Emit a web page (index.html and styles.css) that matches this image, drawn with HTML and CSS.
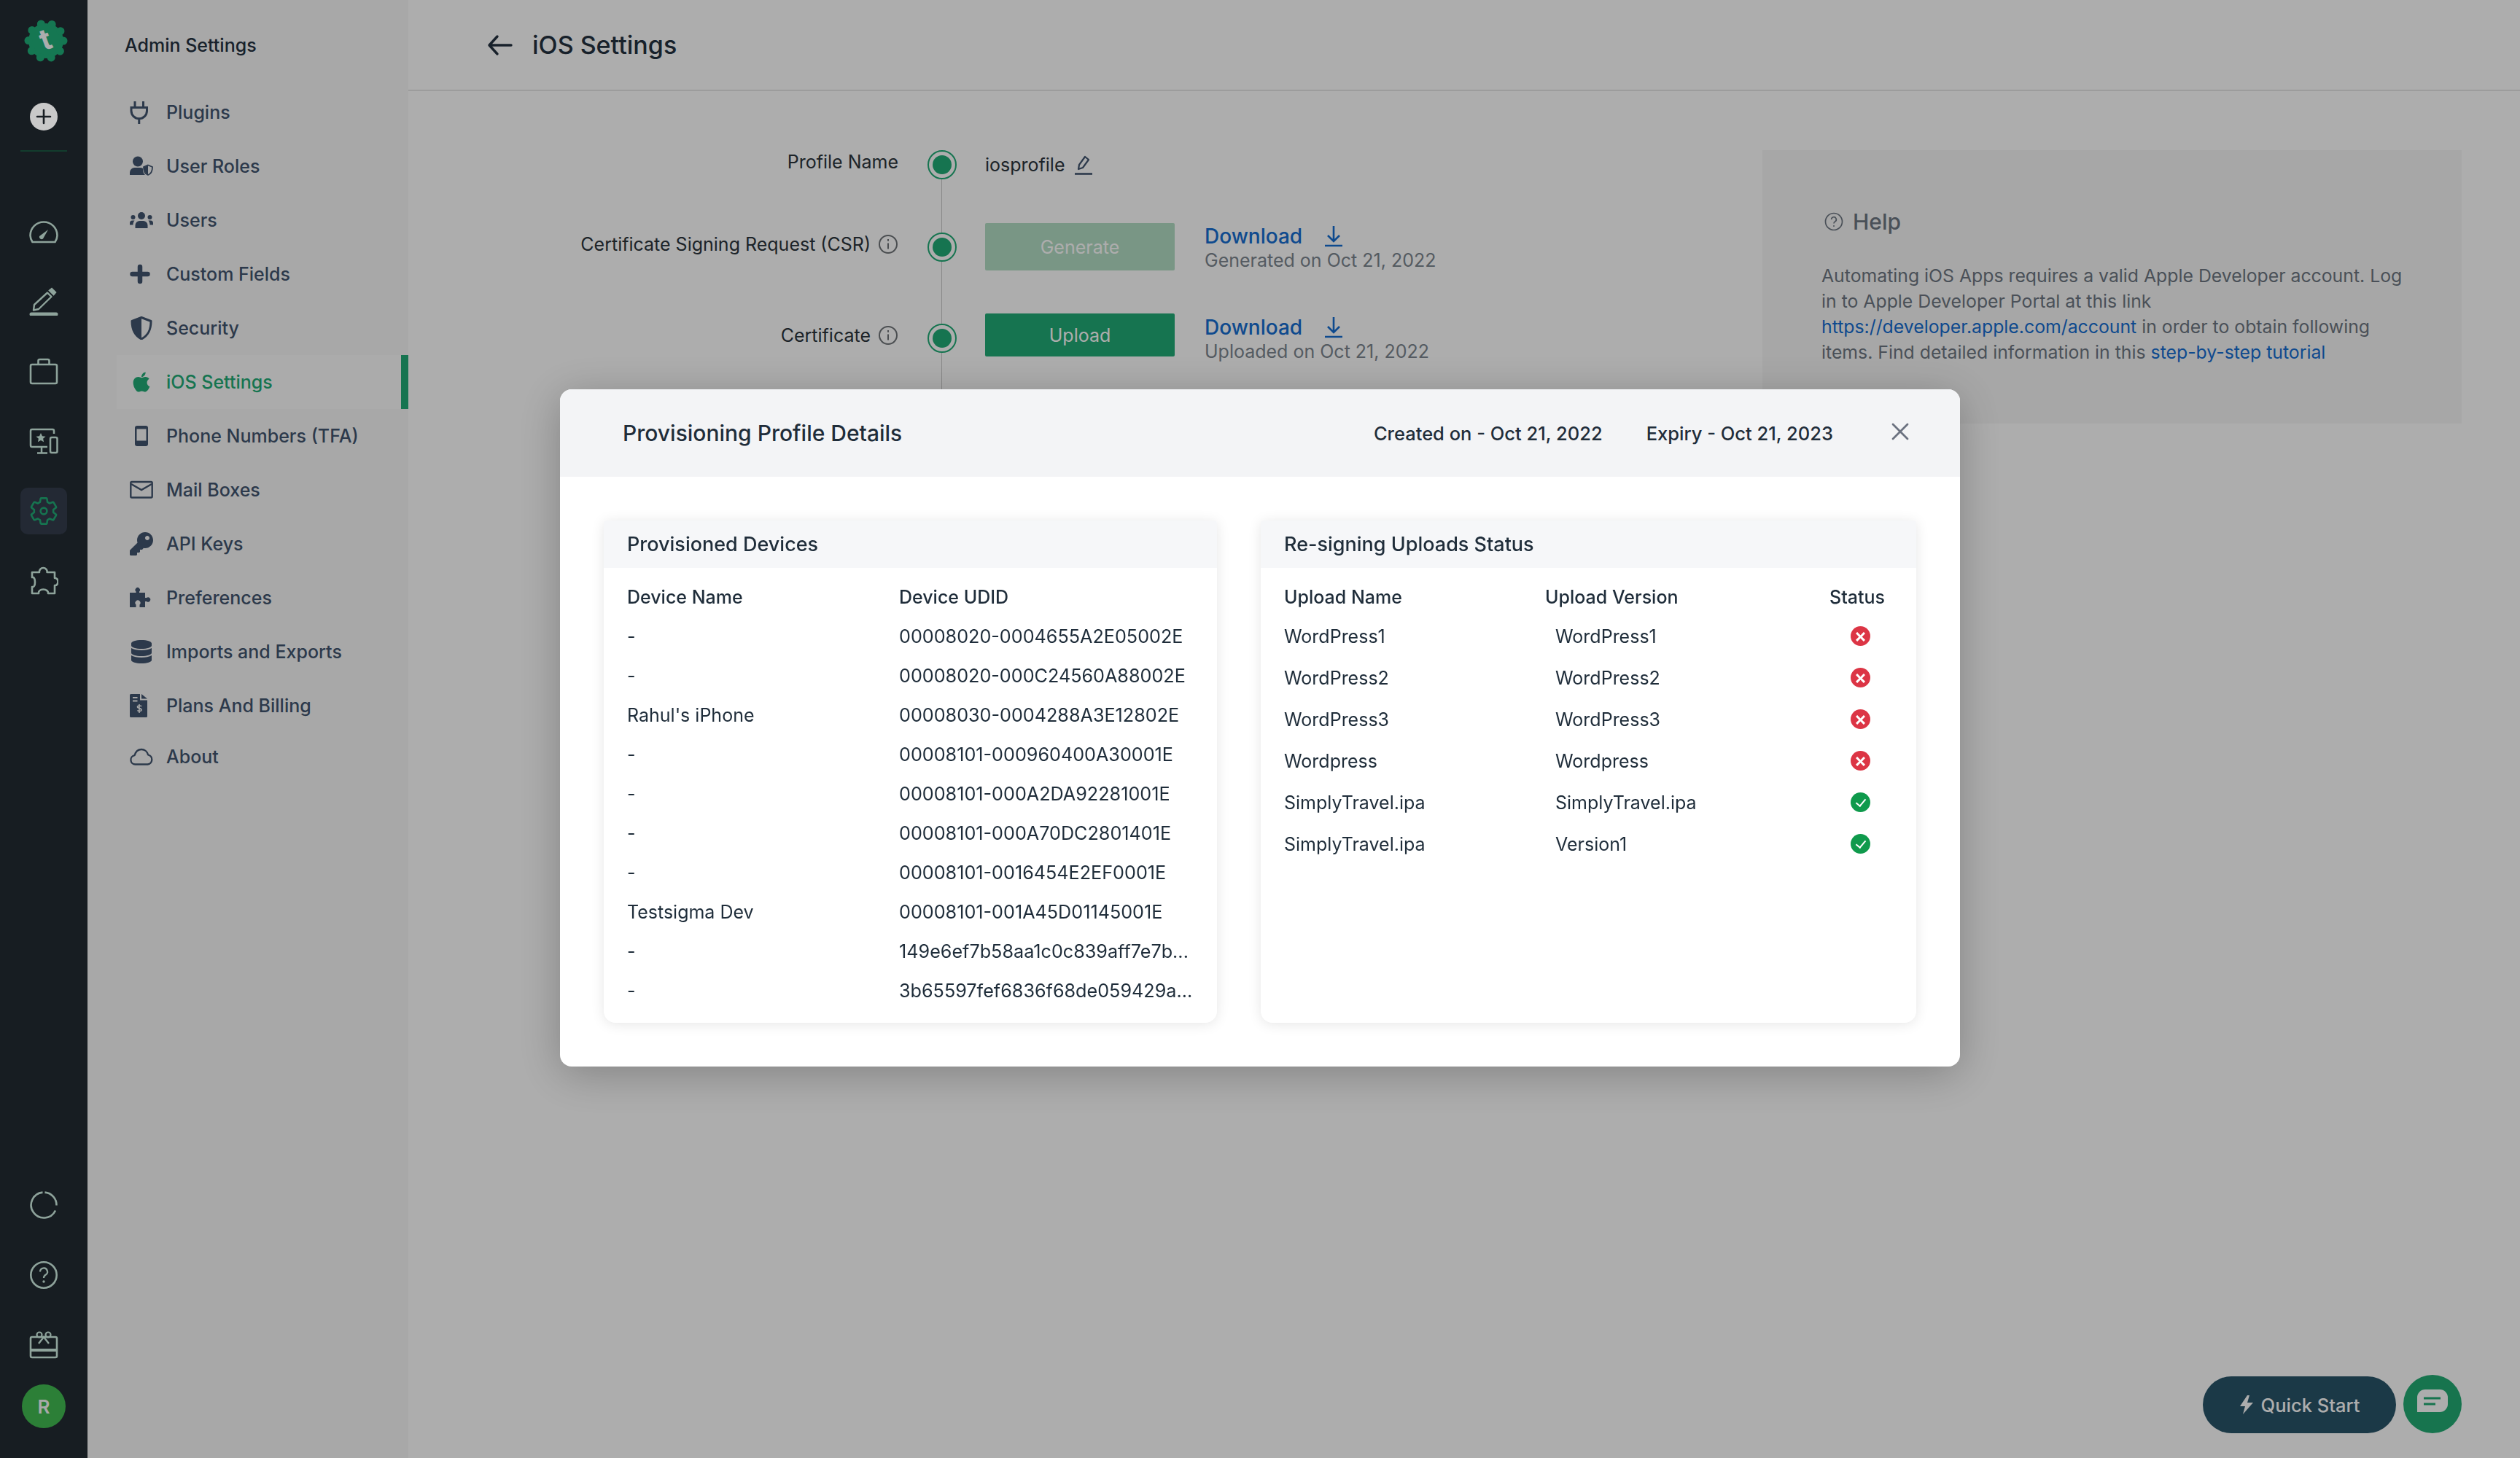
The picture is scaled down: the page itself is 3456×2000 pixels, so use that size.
FILE: index.html
```html
<!DOCTYPE html>
<html lang="en">
<head>
  <meta charset="UTF-8">
  <title>iOS Settings</title>
  <link rel="stylesheet" href="styles.css">
</head>
<body>
  <div class="page">
    <!-- Icon rail -->
    <div class="rail">
      <div class="rail-top">
        <svg class="logo" width="64" height="64" viewBox="0 0 64 64">
          <circle cx="32" cy="32" r="24" fill="#1fb07a" stroke="#1fb07a" stroke-width="11" stroke-linecap="round" stroke-dasharray="0 15.08"/>
          <text class="logo-t" x="32" y="44" text-anchor="middle" transform="rotate(-20 32 32)">t</text>
        </svg>
        <div class="rail-add">
          <svg width="22" height="22" viewBox="0 0 22 22"><path d="M11 2v18M2 11h18" stroke="#181e23" stroke-width="2.6" stroke-linecap="round"/></svg>
        </div>
        <div class="rail-divider"></div>
        <div class="rail-icons">
          <div class="rail-item">
            <svg width="40" height="40" viewBox="0 0 40 40" fill="none" stroke="currentColor" stroke-width="2.6"><path d="M4.5 35C3 32.5 1.5 30 1.5 26a18.5 18.5 0 0 1 37 0c0 4-1.500 6.500-3 9z" stroke-linejoin="round"/><path d="M14 27l12-9-7 12.5a3.2 3.2 0 0 1-5-3.5z" fill="currentColor" stroke="none"/></svg>
          </div>
          <div class="rail-item">
            <svg width="40" height="40" viewBox="0 0 40 40" fill="none" stroke="currentColor" stroke-width="2.4"><path d="M7 25L25 8.5l5.5 5.5L13 31l-7 1.5z" stroke-linejoin="round"/><path d="M28 5.500l3-2.500 5 5-2.500 3z" fill="currentColor"/><path d="M3 38h34" stroke-width="5" stroke-linecap="round"/></svg>
          </div>
          <div class="rail-item">
            <svg width="40" height="40" viewBox="0 0 40 40" fill="none" stroke="currentColor" stroke-width="2.6"><rect x="2" y="11" width="36" height="26" rx="2"/><path d="M12.5 11V6a2 2 0 0 1 2-2h11a2 2 0 0 1 2 2v5"/></svg>
          </div>
          <div class="rail-item">
            <svg width="40" height="40" viewBox="0 0 40 40" fill="none" stroke="currentColor" stroke-width="2.5"><path d="M34 10V6a2 2 0 0 0-2-2H4a2 2 0 0 0-2 2v20a2 2 0 0 0 2 2h21M17 28v8M11 36.5h14"/><rect x="29" y="15" width="9.5" height="21" rx="2"/><path d="M16 9l2 4.3 4.500.5-3.400 3 1 4.400-4.100-2.300-4.100 2.300 1-4.400-3.400-3 4.500-.5z" fill="currentColor" stroke="none"/></svg>
          </div>
          <div class="rail-item is-active">
            <svg width="44" height="44" viewBox="0 0 24 24" fill="none" stroke="currentColor" stroke-width="1.4" stroke-linejoin="round"><circle cx="12" cy="12" r="2.4"/><path d="M19.14 12.94c.04-.3.06-.61.06-.94 0-.32-.02-.64-.07-.94l2.03-1.58c.18-.14.23-.41.12-.61l-1.92-3.32c-.12-.22-.37-.29-.59-.22l-2.39.96c-.5-.38-1.03-.7-1.62-.94l-.36-2.54c-.04-.24-.24-.41-.48-.41h-3.84c-.24 0-.43.17-.47.41l-.36 2.54c-.59.24-1.13.57-1.62.94l-2.39-.96c-.22-.08-.47 0-.59.22L2.74 8.87c-.12.21-.08.47.12.61l2.03 1.58c-.05.3-.09.63-.09.94s.02.64.07.94l-2.03 1.58c-.18.14-.23.41-.12.61l1.92 3.32c.12.22.37.29.59.22l2.39-.96c.5.38 1.03.7 1.62.94l.36 2.54c.05.24.24.41.48.41h3.84c.24 0 .44-.17.47-.41l.36-2.54c.59-.24 1.13-.56 1.62-.94l2.39.96c.22.08.47 0 .59-.22l1.92-3.32c.12-.22.07-.47-.12-.61l-2.01-1.58z"/></svg>
          </div>
          <div class="rail-item">
            <svg width="40" height="40" viewBox="0 0 40 40" fill="none" stroke="currentColor" stroke-width="2.6" stroke-linejoin="round"><path d="M4 8H14c-.5-3 2-6 5.300-6s5.800 3 5.300 6H35V16c3-.5 4.500 2.500 4.500 5s-1.500 5.500-4.500 5V37H26c.5-3-2.500-5.500-6.700-5.500S12.500 34 13 37H4V28c3 1 4-3 4-6.500s-1-7.500-4-6.500z"/></svg>
          </div>
        </div>
      </div>
      <div class="rail-bottom">
        <div class="rail-item">
          <svg width="40" height="40" viewBox="0 0 40 40" fill="none" stroke="currentColor" stroke-width="2.6"><path d="M21.5 2.6A17.5 17.5 0 0 1 37.5 20.5"/><path d="M36 27.5A17.5 17.5 0 1 1 18.500 2.600"/></svg>
        </div>
        <div class="rail-item">
          <svg width="40" height="40" viewBox="0 0 40 40" fill="none" stroke="currentColor" stroke-width="2.6"><circle cx="20" cy="20" r="17.7"/><path d="M15 15.5a5 5 0 1 1 7.5 4.3c-1.8 1.100-2.500 2.200-2.500 4.200" stroke-width="2.2"/><circle cx="20" cy="29" r="1.7" fill="currentColor" stroke="none"/></svg>
        </div>
        <div class="rail-item">
          <svg width="40" height="40" viewBox="0 0 40 40" fill="none" stroke="currentColor" stroke-width="2.6"><rect x="2" y="9" width="36" height="28" rx="2"/><path d="M2 27h36" stroke-width="4"/><path d="M13 18l7-9 7 9" stroke-width="2.4"/><circle cx="14" cy="6" r="3.5" stroke-width="2.2"/><circle cx="26" cy="6" r="3.5" stroke-width="2.2"/></svg>
        </div>
        <div class="avatar">R</div>
      </div>
    </div>

    <!-- Settings sidebar -->
    <div class="sidebar">
      <div class="sidebar-title">Admin Settings</div>
      <div class="side-list">
        <div class="side-item">
          <svg width="32" height="32" viewBox="0 0 32 32" fill="none" stroke="currentColor" stroke-width="3"><path d="M7 1v8M18.500 1v8M2 9.500h21.500v4.500a10.750 10.750 0 0 1-21.500 0zM12.750 25v7"/></svg>
          <span>Plugins</span>
        </div>
        <div class="side-item">
          <svg width="32" height="32" viewBox="0 0 32 32" fill="currentColor"><circle cx="11" cy="9.500" r="7"/><path d="M0 28v-3.500a6.500 6.500 0 0 1 6.500-6.500h8a7 7 0 0 1 3.500 1c0 4 .5 7 3 9z"/><path d="M25 14.500l6 2.500c0 6-2 9.500-6 11-4-1.500-6-5-6-11z" fill="none" stroke="currentColor" stroke-width="1.800"/><path d="M25 15l-5.500 2.300c0 5.500 2 8.700 5.500 10.200z"/></svg>
          <span>User Roles</span>
        </div>
        <div class="side-item">
          <svg width="32" height="32" viewBox="0 0 32 32" fill="currentColor"><circle cx="16" cy="10" r="5"/><circle cx="4.500" cy="12" r="3"/><circle cx="27.500" cy="12" r="3"/><path d="M7.500 27v-4a6 6 0 0 1 6-6h5a6 6 0 0 1 6 6v4zM0 22.500V20a3.500 3.500 0 0 1 3.500-3.500h3c-1.300 1.500-2 3.500-2 6zM32 22.500V20a3.500 3.500 0 0 0-3.500-3.500h-3c1.300 1.500 2 3.500 2 6z"/></svg>
          <span>Users</span>
        </div>
        <div class="side-item">
          <svg width="32" height="32" viewBox="0 0 32 32" fill="none" stroke="currentColor" stroke-width="6.500" stroke-linecap="round"><path d="M14 6v20M3.500 16h21"/></svg>
          <span>Custom Fields</span>
        </div>
        <div class="side-item">
          <svg width="32" height="32" viewBox="0 0 32 32" fill="currentColor"><path d="M16 1.500L29 6.500c0 12-3.500 19.500-13 24.500-9.500-5-13-12.500-13-24.500z" fill="none" stroke="currentColor" stroke-width="3" stroke-linejoin="round"/><path d="M16 1.500L3 6.500c0 12 3.500 19.500 13 24.500z"/></svg>
          <span>Security</span>
        </div>
        <div class="side-item is-active">
          <svg width="32" height="32" viewBox="-60 -10 497 532" fill="currentColor"><path d="M314.700 268.700c-.2-36.700 16.400-64.400 50-84.800-18.800-26.900-47.200-41.700-84.700-44.600-35.500-2.800-74.300 20.700-88.500 20.700-15 0-49.400-19.700-76.400-19.700C59.300 141.200 0 184.800 0 273.500q0 39.300 14.400 81.200c12.800 36.700 59 126.700 107.200 125.200 25.200-.6 43-17.900 75.800-17.900 31.800 0 48.300 17.900 76.400 17.900 48.600-.7 90.400-82.500 102.600-119.300-65.200-30.700-61.700-90-61.700-91.900zm-56.600-164.200c27.300-32.400 24.800-61.900 24-72.500-24.100 1.400-52 16.400-67.900 34.900-17.500 19.800-27.800 44.300-25.600 71.900 26.100 2 49.900-11.400 69.500-34.300z"/></svg>
          <span>iOS Settings</span>
        </div>
        <div class="side-item">
          <svg width="32" height="32" viewBox="0 0 32 32"><rect x="7" y="2" width="18" height="28" rx="3" fill="currentColor"/><rect x="9.500" y="6.500" width="13" height="16" fill="#f8f8f8"/></svg>
          <span>Phone Numbers (TFA)</span>
        </div>
        <div class="side-item">
          <svg width="32" height="32" viewBox="0 0 32 32" fill="none" stroke="currentColor" stroke-width="2.400"><rect x="1.300" y="5" width="29.400" height="21.500" rx="1.500"/><path d="M2 8l14 8 14-8"/></svg>
          <span>Mail Boxes</span>
        </div>
        <div class="side-item">
          <svg width="32" height="32" viewBox="0 0 512 512" fill="currentColor"><path d="M512 176.001C512 273.203 433.202 352 336 352c-11.220 0-22.190-1.062-32.827-3.069l-24.012 27.014A23.999 23.999 0 0 1 261.223 384H224v40c0 13.255-10.745 24-24 24h-40v40c0 13.255-10.745 24-24 24H24c-13.255 0-24-10.745-24-24v-78.059c0-6.365 2.529-12.470 7.029-16.971l161.802-161.802C163.108 213.814 160 195.271 160 176 160 78.798 238.797.001 335.999 0 433.488-.001 512 78.511 512 176.001zM336 128c0 26.510 21.490 48 48 48s48-21.490 48-48-21.490-48-48-48-48 21.490-48 48z"/></svg>
          <span>API Keys</span>
        </div>
        <div class="side-item">
          <svg width="32" height="32" viewBox="0 0 32 32" fill="currentColor"><path d="M0 9h8.500V7.500a3.200 3.200 0 1 1 4.500 0V9h8v7h2a3.200 3.200 0 1 1 0 5h-2v8h-7.500v-3.500a3.500 3.500 0 1 0-5 0V29H0z"/></svg>
          <span>Preferences</span>
        </div>
        <div class="side-item">
          <svg width="32" height="32" viewBox="-32 0 512 512" fill="currentColor"><path d="M448 73.143v45.714C448 159.143 347.667 192 224 192S0 159.143 0 118.857V73.143C0 32.857 100.333 0 224 0s224 32.857 224 73.143zM448 176v102.857C448 319.143 347.667 352 224 352S0 319.143 0 278.857V176c48.125 33.143 136.208 48.572 224 48.572S399.874 209.143 448 176zM448 336v102.857C448 479.143 347.667 512 224 512S0 479.143 0 438.857V336c48.125 33.143 136.208 48.572 224 48.572S399.874 369.143 448 336z"/></svg>
          <span>Imports and Exports</span>
        </div>
        <div class="side-item">
          <svg width="32" height="32" viewBox="0 0 32 32" fill="currentColor"><path d="M0 1.500A1.500 1.500 0 0 1 1.500 0H14v8.500h10v22a1.500 1.500 0 0 1-1.500 1.500h-21A1.500 1.500 0 0 1 0 30.500z"/><path d="M16 0l8 6.500h-8z"/><path d="M4 5h6.500M4 9.500h6.500" stroke="#f8f8f8" stroke-width="2" fill="none"/><path d="M16 17c-1-1.500-5.500-1.500-5.500.6 0 2.600 5.500 1.400 5.500 4.200 0 2.200-4.500 2.200-5.500.6M13 14v12" stroke="#f8f8f8" stroke-width="1.600" fill="none"/></svg>
          <span>Plans And Billing</span>
        </div>
        <div class="side-item side-item-last">
          <svg width="32" height="32" viewBox="0 0 32 32" fill="none" stroke="currentColor" stroke-width="2.300" stroke-linejoin="round"><path d="M7.500 26.500a6.200 6.200 0 0 1-1-12.300C8 9 11.500 6 16 6c4.500 0 8 3 9 7.300a6.700 6.700 0 0 1-.5 13.200z"/></svg>
          <span>About</span>
        </div>
      </div>
    </div>

    <!-- Page behind the dialog -->
    <div class="main">
      <div class="topbar">
        <svg width="36" height="36" viewBox="0 0 36 36" fill="none" stroke="#243140" stroke-width="3.400" stroke-linecap="round" stroke-linejoin="round"><path d="M33 18H3M14 6L3 18l11 12"/></svg>
        <h1>iOS Settings</h1>
      </div>
      <div class="content">
        <div class="steps">
          <div class="steps-line"></div>
          <div class="step">
            <div class="step-label">Profile Name</div>
            <div class="step-dot"><span></span></div>
            <div class="step-body">
              <span class="profile-name">iosprofile</span>
              <svg width="28" height="28" viewBox="0 0 28 28" fill="none" stroke="#42556f" stroke-width="2.200" stroke-linejoin="round"><path d="M7 20l1-6L16 3l5 4-8 11z"/><path d="M2 26.500h24" stroke-width="2.600"/></svg>
            </div>
          </div>
          <div class="step">
            <div class="step-label">Certificate Signing Request (CSR) <svg class="info" width="28" height="28" viewBox="0 0 28 28" fill="none" stroke="#6f7478" stroke-width="2"><circle cx="14" cy="14" r="12"/><path d="M14 12.500v8M14 7v2.800"/></svg></div>
            <div class="step-dot"><span></span></div>
            <div class="step-body">
              <div class="btn btn-disabled">Generate</div>
              <div class="file-info">
                <div class="download">Download <svg width="26" height="30" viewBox="0 0 26 30" fill="none" stroke="#166dd1" stroke-width="2.600"><path d="M13 1v20M5 14l8 8 8-8M1 28h24"/></svg></div>
                <div class="file-date">Generated on Oct 21, 2022</div>
              </div>
            </div>
          </div>
          <div class="step">
            <div class="step-label">Certificate <svg class="info" width="28" height="28" viewBox="0 0 28 28" fill="none" stroke="#6f7478" stroke-width="2"><circle cx="14" cy="14" r="12"/><path d="M14 12.500v8M14 7v2.800"/></svg></div>
            <div class="step-dot"><span></span></div>
            <div class="step-body step-body-top">
              <div class="btn btn-primary">Upload</div>
              <div class="file-info">
                <div class="download">Download <svg width="26" height="30" viewBox="0 0 26 30" fill="none" stroke="#166dd1" stroke-width="2.600"><path d="M13 1v20M5 14l8 8 8-8M1 28h24"/></svg></div>
                <div class="file-date">Uploaded on Oct 21, 2022</div>
              </div>
            </div>
          </div>
        </div>
        <div class="help">
          <div class="help-title">
            <svg width="26" height="26" viewBox="0 0 26 26" fill="none" stroke="#6e7782" stroke-width="1.700"><circle cx="13" cy="13" r="11.500"/><path d="M9.700 10a3.300 3.300 0 1 1 4.900 2.900c-1.100.7-1.600 1.400-1.600 2.700"/><circle cx="13" cy="19" r="1" fill="#6e7782" stroke="none"/></svg>
            Help
          </div>
          <p>Automating iOS Apps requires a valid Apple Developer account. Log in to Apple Developer Portal at this link <a>https://developer.apple.com/account</a> in order to obtain following items. Find detailed information in this <a>step-by-step tutorial</a></p>
        </div>
      </div>
    </div>

    <div class="quick-start">
      <svg width="20" height="26" viewBox="0 0 20 26" fill="currentColor"><path d="M11 0L1 15h7l-3 11 14-16h-8l3-10z"/></svg>
      Quick Start
    </div>
    <div class="chat-button">
      <svg width="42" height="32" viewBox="0 0 42 32"><path d="M0 11A11 11 0 0 1 11 0h20a11 11 0 0 1 11 11v9a11 11 0 0 1-11 11H0z" fill="#fff"/><path d="M9 12h23M9 20h16" stroke="#22ac74" stroke-width="3"/></svg>
    </div>
  </div>

  <!-- Dialog -->
  <div class="backdrop">
    <div class="modal">
      <div class="modal-head">
        <div class="modal-title">Provisioning Profile Details</div>
        <div class="modal-date">Created on - Oct 21, 2022</div>
        <div class="modal-date">Expiry - Oct 21, 2023</div>
        <svg class="modal-close" width="24" height="24" viewBox="0 0 24 24" fill="none" stroke="#6b7280" stroke-width="2.800" stroke-linecap="round"><path d="M2 2l20 20M22 2L2 22"/></svg>
      </div>
      <div class="modal-body">
        <div class="card">
          <div class="card-head">Provisioned Devices</div>
          <table class="devices">
            <thead>
              <tr><th>Device Name</th><th>Device UDID</th></tr>
            </thead>
            <tbody>
              <tr><td>-</td><td>00008020-0004655A2E05002E</td></tr>
              <tr><td>-</td><td>00008020-000C24560A88002E</td></tr>
              <tr><td>Rahul's iPhone</td><td>00008030-0004288A3E12802E</td></tr>
              <tr><td>-</td><td>00008101-000960400A30001E</td></tr>
              <tr><td>-</td><td>00008101-000A2DA92281001E</td></tr>
              <tr><td>-</td><td>00008101-000A70DC2801401E</td></tr>
              <tr><td>-</td><td>00008101-0016454E2EF0001E</td></tr>
              <tr><td>Testsigma Dev</td><td>00008101-001A45D01145001E</td></tr>
              <tr><td>-</td><td>149e6ef7b58aa1c0c839aff7e7b...</td></tr>
              <tr><td>-</td><td>3b65597fef6836f68de059429a...</td></tr>
            </tbody>
          </table>
        </div>
        <div class="card">
          <div class="card-head">Re-signing Uploads Status</div>
          <table class="uploads">
            <thead>
              <tr><th>Upload Name</th><th>Upload Version</th><th>Status</th></tr>
            </thead>
            <tbody>
              <tr><td>WordPress1</td><td>WordPress1</td><td><span class="status status-fail"></span></td></tr>
              <tr><td>WordPress2</td><td>WordPress2</td><td><span class="status status-fail"></span></td></tr>
              <tr><td>WordPress3</td><td>WordPress3</td><td><span class="status status-fail"></span></td></tr>
              <tr><td>Wordpress</td><td>Wordpress</td><td><span class="status status-fail"></span></td></tr>
              <tr><td>SimplyTravel.ipa</td><td>SimplyTravel.ipa</td><td><span class="status status-ok"></span></td></tr>
              <tr><td>SimplyTravel.ipa</td><td>Version1</td><td><span class="status status-ok"></span></td></tr>
            </tbody>
          </table>
        </div>
      </div>
    </div>
  </div>
</body>
</html>
```

FILE: styles.css
```css
body {
  font-family: Inter, "Liberation Sans", sans-serif;
  background-color: #fff;
  color: #243140;
  margin: 0;
  padding: 0;
  overflow: hidden;
}
.page {
  display: flex;
  height: 2000px;
}

/* Icon rail */
.rail {
  width: 120px;
  flex: none;
  display: flex;
  flex-direction: column;
  justify-content: space-between;
  background-color: #232c33;
  color: #d2f0e5;
}
.rail-top {
  display: flex;
  flex-direction: column;
  align-items: center;
}
.logo {
  margin: 24px 0 0 6px;
}
.logo-t {
  font-family: Inter, sans-serif;
  font-size: 40px;
  font-weight: 700;
  fill: #fff;
}
.rail-add {
  position: relative;
  z-index: 20;
  width: 38px;
  height: 38px;
  margin-top: 53px;
  border-radius: 50%;
  background-color: #c9c9c9;
  display: flex;
  align-items: center;
  justify-content: center;
}
.rail-divider {
  width: 64px;
  height: 2px;
  margin-top: 27px;
  background-color: #1d5a45;
}
.rail-icons {
  margin-top: 77px;
}
.rail-item {
  width: 64px;
  height: 64px;
  margin-bottom: 32px;
  border-radius: 10px;
  display: flex;
  align-items: center;
  justify-content: center;
}
.rail-item.is-active {
  background-color: #343d4d;
  color: #21ac76;
}
.rail-bottom {
  display: flex;
  flex-direction: column;
  align-items: center;
  padding-bottom: 41px;
}
.avatar {
  width: 60px;
  height: 60px;
  margin-top: -10px;
  border-radius: 50%;
  background-color: #41bb51;
  color: #f9f9f9;
  font-size: 26px;
  font-weight: 600;
  display: flex;
  align-items: center;
  justify-content: center;
}

/* Settings sidebar */
.sidebar {
  width: 440px;
  flex: none;
  background-color: #f8f8f8;
}
.sidebar-title {
  margin: 45px 0 0 51px;
  font-size: 25px;
  line-height: 34px;
  font-weight: 500;
  color: #243140;
}
.side-list {
  margin: 38px 0 0 40px;
}
.side-item {
  height: 74px;
  padding-left: 18px;
  display: flex;
  align-items: center;
  gap: 18px;
  font-size: 25px;
  font-weight: 500;
  color: #42556f;
}
.side-item.is-active {
  background-color: #fcfcfc;
  border-right: 10px solid #21ac76;
  color: #21ac76;
}
.side-item-last {
  margin-top: -4px;
}

/* Main page */
.main {
  flex: 1;
}
.topbar {
  height: 125px;
  padding-left: 108px;
  box-sizing: border-box;
  display: flex;
  align-items: center;
  gap: 26px;
  border-bottom: 2px solid #e6e6e6;
}
.topbar h1 {
  margin: 0;
  font-size: 34px;
  font-weight: 500;
  color: #243140;
}
.content {
  display: flex;
  justify-content: space-between;
  align-items: flex-start;
}
.steps {
  position: relative;
  padding-top: 68px;
}
.steps-line {
  position: absolute;
  left: 731px;
  top: 100px;
  width: 1px;
  height: 400px;
  background-color: #c9c9c9;
}
.step {
  position: relative;
  display: grid;
  grid-template-columns: 672px 119px auto;
  height: 65px;
  margin-bottom: 48px;
  align-items: center;
}
.step:nth-child(3) {
  margin-bottom: 60px;
}
.step-label {
  padding-bottom: 8px;
  font-size: 25px;
  color: #2b343c;
  text-align: right;
  display: flex;
  align-items: center;
  justify-content: flex-end;
  gap: 10px;
}
.step-dot {
  width: 40px;
  height: 40px;
  justify-self: center;
  box-sizing: border-box;
  border: 2px solid #21ac76;
  border-radius: 50%;
  background-color: #fff;
  display: flex;
  align-items: center;
  justify-content: center;
}
.step-dot span {
  width: 26px;
  height: 26px;
  border-radius: 50%;
  background-color: #21ac76;
}
.step-body {
  display: flex;
  align-items: center;
  gap: 12px;
}
.step-body-top {
  align-items: flex-start;
}
.profile-name {
  font-size: 25px;
  color: #2b343c;
}
.btn {
  width: 260px;
  height: 65px;
  margin-right: 29px;
  border-radius: 2px;
  font-size: 25px;
  color: #fff;
  display: flex;
  align-items: center;
  justify-content: center;
}
.btn-disabled {
  background-color: #b3ddc5;
  margin-top: -1px;
}
.btn-primary {
  height: 59px;
  margin-top: -1px;
  background-color: #21ac76;
}
.file-info {
  display: flex;
  flex-direction: column;
}
.download {
  height: 36px;
  font-size: 28px;
  font-weight: 500;
  color: #166dd1;
  display: flex;
  align-items: center;
  gap: 30px;
}
.file-date {
  font-size: 25px;
  line-height: 30px;
  color: #7d8690;
}
.help {
  width: 959px;
  height: 375px;
  margin: 81px 80px 0 0;
  padding: 78px 70px 0 81px;
  box-sizing: border-box;
  background-color: #f7f7f7;
  color: #6e7782;
}
.help-title {
  height: 40px;
  font-size: 30px;
  font-weight: 500;
  display: flex;
  align-items: center;
  gap: 13px;
  padding-left: 4px;
}
.help p {
  margin: 37px 0 0;
  font-size: 24.8px;
  line-height: 35px;
}
.help a {
  color: #166dd1;
}
.quick-start {
  position: absolute;
  left: 3021px;
  top: 1888px;
  width: 265px;
  height: 78px;
  border-radius: 39px;
  background-color: #295569;
  color: #fff;
  font-size: 25.5px;
  font-weight: 500;
  display: flex;
  align-items: center;
  justify-content: center;
  gap: 10px;
}
.chat-button {
  position: absolute;
  left: 3296px;
  top: 1886px;
  width: 80px;
  height: 80px;
  border-radius: 50%;
  background-color: #22ac74;
  display: flex;
  align-items: center;
  justify-content: center;
  padding-bottom: 8px;
  box-sizing: border-box;
}

/* Dialog */
.backdrop {
  position: fixed;
  top: 0;
  left: 0;
  right: 0;
  bottom: 0;
  z-index: 10;
  background-color: rgba(0, 0, 0, 0.32);
}
.modal {
  width: 1920px;
  height: 929px;
  margin: 534px auto 0;
  border-radius: 16px;
  background-color: #fff;
  overflow: hidden;
  box-shadow: 0 10px 60px rgba(0, 0, 0, 0.25);
}
.modal-head {
  height: 120px;
  padding: 0 70px 0 86px;
  box-sizing: border-box;
  background-color: #f3f4f6;
  display: flex;
  align-items: center;
}
.modal-title {
  flex: 1;
  font-size: 30px;
  font-weight: 500;
  color: #1f2d3a;
}
.modal-date {
  margin-right: 60px;
  font-size: 25.5px;
  font-weight: 500;
  color: #1f2d3a;
}
.modal-date + .modal-date {
  margin-right: 80px;
}
.modal-close {
  margin-bottom: 4px;
}
.modal-body {
  padding: 60px;
  display: grid;
  grid-template-columns: 841px 899px;
  gap: 60px;
}
.card {
  height: 689px;
  border-radius: 4px 4px 16px 16px;
  background-color: #fff;
  box-shadow: 0 2px 18px rgba(0, 0, 0, 0.1);
  overflow: hidden;
}
.card-head {
  height: 65px;
  padding-left: 32px;
  background-color: #f6f7f9;
  font-size: 27px;
  font-weight: 500;
  line-height: 65px;
  color: #1f2d3a;
}
table {
  width: 100%;
  border-collapse: collapse;
  table-layout: fixed;
  font-size: 25px;
  color: #1f2d3a;
}
th {
  font-weight: 500;
  text-align: left;
  padding: 0;
}
td {
  padding: 0;
}
th:first-child, td:first-child {
  padding-left: 32px;
}
.devices {
  margin-top: 13px;
}
.devices th {
  height: 54px;
}
.devices td {
  height: 54px;
}
.devices td:nth-child(2) {
  font-size: 25.2px;
}
.devices th:first-child {
  width: 373px;
}
.uploads {
  margin-top: 14px;
}
.uploads th {
  height: 51px;
}
.uploads td {
  height: 57px;
}
.uploads th:first-child {
  width: 358px;
}
.uploads th:nth-child(2) {
  width: 390px;
}
.uploads td:nth-child(2) {
  padding-left: 14px;
}
.status {
  display: block;
  width: 27px;
  height: 27px;
  margin-left: 29px;
  border-radius: 50%;
  position: relative;
}
.status-fail {
  background-color: #dc3545;
}
.status-fail::before {
  content: "×";
  position: absolute;
  top: 0;
  left: 0;
  width: 27px;
  line-height: 26px;
  text-align: center;
  font-size: 26px;
  font-weight: 600;
  color: #fff;
}
.status-ok {
  background-color: #0f9a4c;
}
.status-ok::before {
  content: "";
  position: absolute;
  top: 6px;
  left: 10px;
  width: 6px;
  height: 11px;
  border: solid #fff;
  border-width: 0 2.5px 2.5px 0;
  transform: rotate(40deg);
}
```
